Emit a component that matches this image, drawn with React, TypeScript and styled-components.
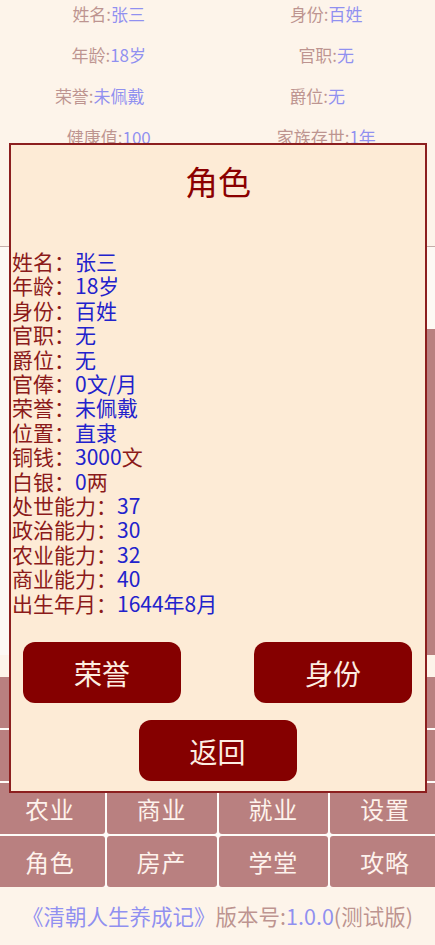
import React from "react";
import styled, { createGlobalStyle } from "styled-components";

const GlobalStyle = createGlobalStyle`
  html, body {
    margin: 0;
    padding: 0;
    background: #fbe9d5;
    font-family: "Noto Sans CJK SC", "Noto Sans", sans-serif;
  }
  * {
    box-sizing: border-box;
  }
`;

const colors = {
  label: "#7a2820",
  value: "#2020e0",
  rose: "#730000",
  dark: "#850000",
  cream: "#fbe9d5",
  modalBg: "#fdebd6"
};

const Page = styled.div`
  display: flex;
  flex-direction: column;
  width: 435px;
  min-height: 945px;
  background: ${colors.cream};
`;

const InfoPanel = styled.div`
  display: grid;
  grid-template-columns: 1fr 1fr;
  grid-auto-rows: 20px;
  row-gap: 21px;
  padding-top: 4px;
  height: 247px;
  border-bottom: 1px solid #8a5a52;
`;

const InfoItem = styled.div<{ $shift?: number }>`
  display: flex;
  justify-content: center;
  align-items: center;
  font-size: 17px;
  line-height: 20px;
  color: ${colors.label};
  transform: translateX(${p => p.$shift || 0}px);
`;

const InfoValue = styled.span`
  color: ${colors.value};
`;

const Middle = styled.div`
  display: flex;
  justify-content: flex-end;
  align-items: flex-start;
  height: 408px;
  padding-top: 82px;
  background: #fbf2e9;
`;

const SidePanel = styled.div`
  width: 60px;
  height: 326px;
  background: ${colors.rose};
`;

const MenuGrid = styled.div`
  display: grid;
  grid-template-columns: repeat(4, 1fr);
  grid-auto-rows: 51px;
  gap: 2px;
  margin: 22px -5px 0;
  background: #fdf8f2;
`;

const MenuCell = styled.div`
  display: flex;
  align-items: center;
  justify-content: center;
  background: ${colors.rose};
  border-radius: 3px;
  color: #fbe4da;
  font-size: 24px;
  letter-spacing: 1px;
`;

const Footer = styled.div`
  display: flex;
  justify-content: center;
  align-items: center;
  height: 57px;
  font-size: 21.5px;
  color: ${colors.label};
`;

const FooterBlue = styled.span`
  color: ${colors.value};
`;

const Overlay = styled.div`
  position: fixed;
  inset: 0;
  background: rgba(255, 255, 255, 0.5);
`;

const Modal = styled.div`
  position: fixed;
  top: 143px;
  left: 9px;
  width: 418px;
  height: 650px;
  display: flex;
  flex-direction: column;
  background: ${colors.modalBg};
  border: 2px solid #8c1f1f;
`;

const Title = styled.h2`
  margin: 0;
  padding-top: 17px;
  text-align: center;
  font-size: 33px;
  font-weight: 400;
  line-height: 38px;
  color: #8b0000;
`;

const List = styled.div`
  display: flex;
  flex-direction: column;
  margin-top: 49px;
  padding-left: 1px;
  font-size: 21px;
  line-height: 24.4px;
`;

const Line = styled.div`
  color: #8b1a1a;
  white-space: nowrap;
`;

const Val = styled.span`
  color: #2222cc;
`;

const Actions = styled.div`
  display: flex;
  flex-direction: column;
  align-items: center;
  gap: 17px;
  margin-top: auto;
  padding: 0 13px 10px 12px;
`;

const ActionRow = styled.div`
  display: flex;
  justify-content: space-between;
  width: 100%;
`;

const ActionButton = styled.button`
  width: 158px;
  height: 61px;
  border: none;
  border-radius: 12px;
  background: ${colors.dark};
  color: #fdeee2;
  font-family: inherit;
  font-size: 28px;
  cursor: pointer;
`;

const info: [string, string, number?][] = [
  ["姓名:", "张三"],
  ["身份:", "百姓"],
  ["年龄:", "18岁"],
  ["官职:", "无"],
  ["荣誉:", "未佩戴", -9],
  ["爵位:", "无", -9],
  ["健康值:", "100"],
  ["家族存世:", "1年"]
];

const menu = ["农业", "商业", "就业", "设置", "角色", "房产", "学堂", "攻略"];

const stats: [string, string, string?][] = [
  ["姓名", "张三"],
  ["年龄", "18岁"],
  ["身份", "百姓"],
  ["官职", "无"],
  ["爵位", "无"],
  ["官俸", "0文/月"],
  ["荣誉", "未佩戴"],
  ["位置", "直隶"],
  ["铜钱", "3000", "文"],
  ["白银", "0", "两"],
  ["处世能力", "37"],
  ["政治能力", "30"],
  ["农业能力", "32"],
  ["商业能力", "40"],
  ["出生年月", "1644年8月"]
];

export default function App() {
  return (
    <>
      <GlobalStyle />
      <Page>
        <InfoPanel>
          {info.map(([label, value, shift]) => (
            <InfoItem key={label} $shift={shift}>
              {label}
              <InfoValue>{value}</InfoValue>
            </InfoItem>
          ))}
        </InfoPanel>
        <Middle>
          <SidePanel />
        </Middle>
        <MenuGrid>
          {/* top two rows sit under the dialog */}
          {[...menu, ...menu].map((m, i) => (
            <MenuCell key={i}>{i >= 8 ? m : ""}</MenuCell>
          ))}
        </MenuGrid>
        <Footer>
          <FooterBlue>《清朝人生养成记》</FooterBlue>版本号:<FooterBlue>1.0.0</FooterBlue>(测试版)
        </Footer>
      </Page>
      <Overlay />
      <Modal>
        <Title>角色</Title>
        <List>
          {stats.map(([label, value, unit]) => (
            <Line key={label}>
              {label}：<Val>{value}</Val>
              {unit}
            </Line>
          ))}
        </List>
        <Actions>
          <ActionRow>
            <ActionButton>荣誉</ActionButton>
            <ActionButton>身份</ActionButton>
          </ActionRow>
          <ActionButton>返回</ActionButton>
        </Actions>
      </Modal>
    </>
  );
}
